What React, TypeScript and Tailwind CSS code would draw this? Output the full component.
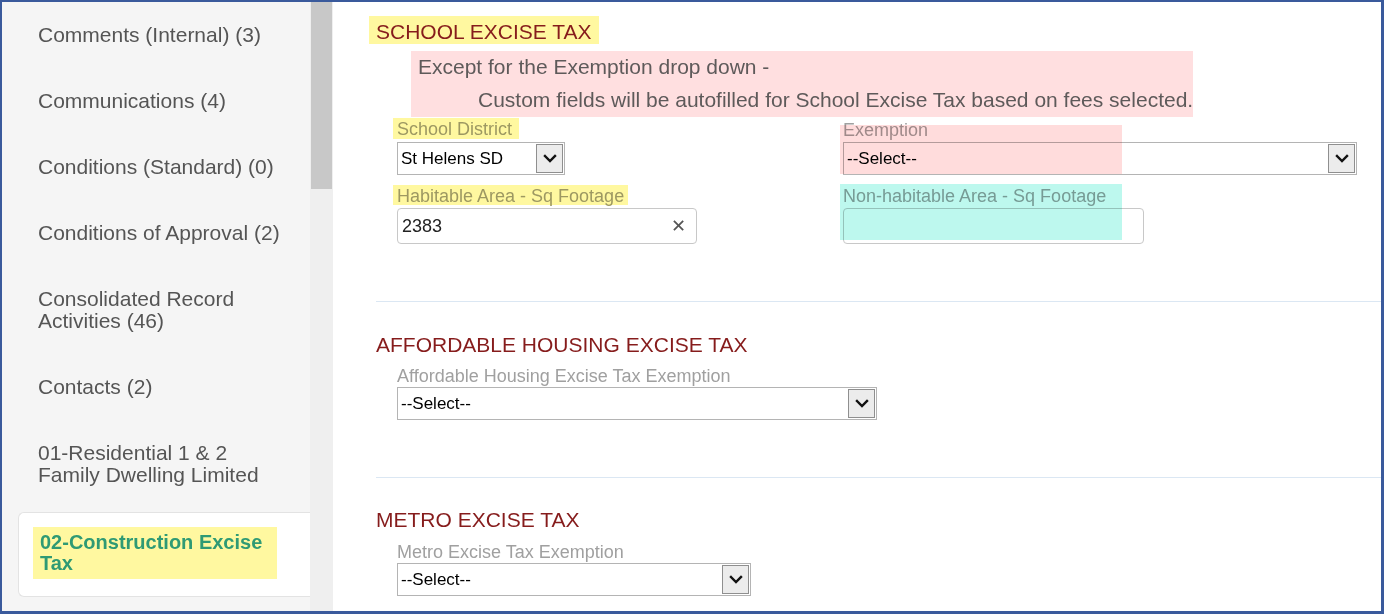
import React from "react";

const FONT = { fontFamily: '"Liberation Sans", Arial, sans-serif' };

function Chevron() {
  return (
    <svg width="14" height="9" viewBox="0 0 14 9" fill="none">
      <path d="M2 2 L7 7 L12 2" stroke="#111" strokeWidth="2.4" strokeLinecap="square" />
    </svg>
  );
}

function Select({ className, text }: { className: string; text: string }) {
  return (
    <div className={`flex h-[33px] border border-[#b4b4b4] bg-white ${className}`}>
      <div className="flex flex-1 items-center pl-[3px] text-[17px] text-black">{text}</div>
      <div className="m-px flex w-[27px] items-center justify-center border border-[#8f8f8f] bg-[#ececec]">
        <Chevron />
      </div>
    </div>
  );
}

const navItems: React.ReactNode[] = [
  "Comments (Internal) (3)",
  "Communications (4)",
  "Conditions (Standard) (0)",
  "Conditions of Approval (2)",
  <>
    Consolidated Record
    <br />
    Activities (46)
  </>,
  "Contacts (2)",
  <>
    01-Residential 1 &amp; 2
    <br />
    Family Dwelling Limited
  </>,
];

export default function App() {
  return (
    <div
      className="flex h-[614px] w-[1384px] overflow-hidden border-2 border-r-[3px] border-b-[3px] border-[#3a5a9c] bg-white"
      style={FONT}
    >
      {/* Sidebar */}
      <div className="flex w-[308px] shrink-0 flex-col bg-[#f5f5f5]">
        {navItems.map((t, i) => (
          <div key={i} className="py-[22px] pl-[36px] text-[21px] leading-[22px] text-[#555]">
            {t}
          </div>
        ))}
        <div className="ml-[16px] mt-[4px] rounded-l-[6px] border border-r-0 border-[#e3e3e3] bg-white pb-[17px] pl-[14px] pt-[14px]">
          <div className="w-[244px] bg-[#fff8a0] px-[7px] py-[5px] text-[20px] font-bold leading-[21px] text-[#2f9a74]">
            02-Construction Excise
            <br />
            Tax
          </div>
        </div>
      </div>

      {/* Scrollbar */}
      <div className="flex w-[23px] shrink-0 flex-col bg-[#efefef]">
        <div className="mx-px h-[187px] bg-[#c8c8c8]" />
      </div>

      {/* Main */}
      <div className="flex-1 pl-[43px] pt-[14px]">
        {/* School excise tax */}
        <div className="-ml-[7px] h-[28px] w-fit bg-[#fff8a0] px-[7px] pt-[3px] text-[21px] leading-[25px] text-[#861c1c]">
          SCHOOL EXCISE TAX
        </div>
        <div className="ml-[35px] mt-[7px] h-[66px] w-[782px] whitespace-nowrap bg-[#ffdfe0] pl-[7px] text-[21px] text-[#5e5a5a]">
          <div className="h-[32px] leading-[32px]">Except for the Exemption drop down -</div>
          <div className="h-[34px] pl-[60px] leading-[34px]">
            Custom fields will be autofilled for School Excise Tax based on fees selected.
          </div>
        </div>

        <div className="ml-[21px] flex">
          {/* left column */}
          <div className="w-[446px]">
            <div className="mt-px h-[22px]">
              <div className="-ml-[4px] h-[21px] w-fit bg-[#fff8a0] pl-[4px] pr-[7px] text-[18px] leading-[22px] text-[#9d9862]">
                School District
              </div>
            </div>
            <Select className="mt-[2px] w-[168px]" text="St Helens SD" />
            <div className="mt-[10px] h-[22px]">
              <div className="-ml-[4px] h-[20px] w-fit bg-[#fff8a0] pl-[4px] pr-[4px] text-[18px] leading-[22px] text-[#9d9862]">
                Habitable Area - Sq Footage
              </div>
            </div>
            <div className="mt-px flex h-[36px] w-[300px] items-center justify-between rounded-[4px] border border-[#c8c8c8] bg-white pl-[4px] pr-[10px] text-[18px] text-[#222]">
              <span>2383</span>
              <span className="text-[18px] text-[#555]">✕</span>
            </div>
          </div>
          {/* right column */}
          <div className="relative w-[514px]">
            <div className="mt-px h-[22px] text-[18px] leading-[24px] text-[#a0a0a0]">Exemption</div>
            <Select className="mt-[2px] w-[514px]" text="--Select--" />
            <div className="mt-[10px] h-[22px] text-[18px] leading-[22px] text-[#a0a0a0]">
              Non-habitable Area - Sq Footage
            </div>
            <div className="mt-px h-[36px] w-[301px] rounded-[4px] border border-[#c8c8c8] bg-white" />
            <div className="pointer-events-none absolute left-[-3px] top-[8px] h-[49px] w-[282px] bg-[#ffdcdc] mix-blend-multiply" />
            <div className="pointer-events-none absolute left-[-3px] top-[67px] h-[56px] w-[282px] bg-[#bdf8ee] mix-blend-multiply" />
          </div>
        </div>

        <div className="mt-[57px] border-t border-[#dbe7f3]" />

        {/* Affordable */}
        <div className="mt-[31px] h-[24px] text-[21px] leading-[24px] text-[#861c1c]">
          AFFORDABLE HOUSING EXCISE TAX
        </div>
        <div className="ml-[21px] mt-[8px] h-[22px] text-[18px] leading-[22px] text-[#a0a0a0]">
          Affordable Housing Excise Tax Exemption
        </div>
        <Select className="ml-[21px] w-[480px]" text="--Select--" />

        <div className="mt-[57px] border-t border-[#dbe7f3]" />

        {/* Metro */}
        <div className="mt-[30px] h-[24px] text-[21px] leading-[24px] text-[#861c1c]">METRO EXCISE TAX</div>
        <div className="ml-[21px] mt-[9px] h-[22px] text-[18px] leading-[22px] text-[#a0a0a0]">
          Metro Excise Tax Exemption
        </div>
        <Select className="ml-[21px] w-[354px]" text="--Select--" />
      </div>
    </div>
  );
}
